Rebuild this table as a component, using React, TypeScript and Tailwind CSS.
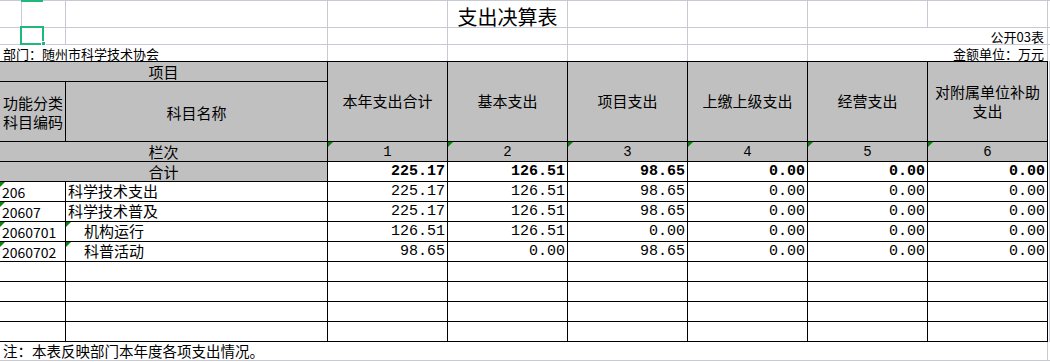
import React from "react";

const COLS = "grid grid-cols-[22px_44px_262px_repeat(6,120px)_2px]";
const GRID = "border-[#c7cad5]";
const HEAD = "bg-[#c0c0c0] border-black";

const headers = ["本年支出合计", "基本支出", "项目支出", "上缴上级支出", "经营支出", "对附属单位补助支出"];

const total = ["225.17", "126.51", "98.65", "0.00", "0.00", "0.00"];

const rows = [
  { code: "206", name: "科学技术支出", sub: false, vals: ["225.17", "126.51", "98.65", "0.00", "0.00", "0.00"] },
  { code: "20607", name: "科学技术普及", sub: false, vals: ["225.17", "126.51", "98.65", "0.00", "0.00", "0.00"] },
  { code: "2060701", name: "机构运行", sub: true, vals: ["126.51", "126.51", "0.00", "0.00", "0.00", "0.00"] },
  { code: "2060702", name: "科普活动", sub: true, vals: ["98.65", "0.00", "98.65", "0.00", "0.00", "0.00"] },
];

function Flag() {
  // little green "number stored as text" marker
  return (
    <span className="absolute top-0 left-0 w-0 h-0 border-t-[5px] border-r-[5px] border-t-[#0a850a] border-r-transparent" />
  );
}

export default function App() {
  return (
    <div className="relative w-[1050px] h-[362px] bg-white overflow-hidden text-black font-['Noto_Sans_CJK_SC',sans-serif]">
      {/* sheet header rows */}
      <div className={`${COLS} grid-rows-[28px_17px_16px]`}>
        {/* row 1 : title */}
        {Array.from({ length: 10 }).map((_, i) => (
          <div
            key={"t" + i}
            className={`border-t border-b ${i < 9 ? "border-r" : ""} ${GRID} flex items-center justify-center pt-[5px] text-[20px] leading-none whitespace-nowrap`}
          >
            {i === 4 ? "支出决算表" : null}
          </div>
        ))}

        {/* row 2 */}
        {Array.from({ length: 7 }).map((_, i) => (
          <div key={"a" + i} className={`border-b border-r ${GRID}`} />
        ))}
        <div className={`col-span-2 border-b border-r ${GRID} flex items-center justify-end pr-[3px] text-[13px] leading-none`}>
          公开03表
        </div>
        <div className={`border-b ${GRID}`} />

        {/* row 3 */}
        <div className={`col-span-3 border-r ${GRID} flex items-end pl-[3px] text-[13px] leading-[15px] whitespace-nowrap`}>
          部门：随州市科学技术协会
        </div>
        {Array.from({ length: 4 }).map((_, i) => (
          <div key={"b" + i} className={`border-r ${GRID}`} />
        ))}
        <div className={`col-span-2 border-r ${GRID} flex items-end justify-end pr-[3px] text-[13px] leading-[15px]`}>
          金额单位：万元
        </div>
        <div />
      </div>

      {/* table head */}
      <div className={`${COLS} grid-rows-[21px_60px] text-[15px]`}>
        <div className={`col-span-3 border-t border-r border-b ${HEAD} flex items-center justify-center leading-none`}>
          项目
        </div>
        {headers.map((h) => (
          <div
            key={h}
            className={`row-span-2 border-t border-r border-b ${HEAD} flex items-center justify-center text-center leading-[19px] px-[6px] pb-[2px]`}
          >
            {h === "对附属单位补助支出" ? (
              <span>
                对附属单位补助
                <br />
                支出
              </span>
            ) : (
              h
            )}
          </div>
        ))}
        <div className={`row-span-2 border-r ${GRID}`} />
        <div className={`col-span-2 border-r border-b ${HEAD} flex items-center pl-[3px] leading-[19px]`}>
          <span>
            功能分类
            <br />
            科目编码
          </span>
        </div>
        <div className={`border-r border-b ${HEAD} flex items-center justify-center pt-[2px] leading-none`}>科目名称</div>
      </div>

      {/* table body */}
      <div className={`${COLS} auto-rows-[20px] text-[15px]`}>
        <div className={`col-span-3 border-r border-b ${HEAD} flex items-center justify-center pb-[1px] leading-none`}>栏次</div>
        {[1, 2, 3, 4, 5, 6].map((n) => (
          <div
            key={n}
            className={`relative border-r border-b ${HEAD} flex items-center justify-center font-['Liberation_Mono',monospace] text-[14px] leading-none`}
          >
            <Flag />
            {n}
          </div>
        ))}
        <div className={`border-r ${GRID}`} />

        <div className={`col-span-3 border-r border-b ${HEAD} flex items-center justify-center pb-[1px] leading-none`}>合计</div>
        {total.map((v, i) => (
          <div
            key={"tot" + i}
            className="border-r border-b border-black flex items-center justify-end pr-[2px] font-['Liberation_Mono',monospace] font-bold leading-none"
          >
            {v}
          </div>
        ))}
        <div className={`border-r ${GRID}`} />

        {rows.map((r) => (
          <React.Fragment key={r.code}>
            <div className="relative col-span-2 border-r border-b border-black flex items-center pl-[2px] text-[14px] leading-none">
              <Flag />
              {r.code}
            </div>
            <div
              className={`relative border-r border-b border-black flex items-center pb-[2px] leading-none ${r.sub ? "pl-[18px]" : "pl-[2px]"}`}
            >
              {r.sub && <Flag />}
              {r.name}
            </div>
            {r.vals.map((v, i) => (
              <div
                key={i}
                className="border-r border-b border-black flex items-center justify-end pr-[2px] font-['Liberation_Mono',monospace] leading-none"
              >
                {v}
              </div>
            ))}
            <div className={`border-r ${GRID}`} />
          </React.Fragment>
        ))}

        {Array.from({ length: 4 }).map((_, k) => (
          <React.Fragment key={"e" + k}>
            <div className="col-span-2 border-r border-b border-black" />
            {Array.from({ length: 7 }).map((_, i) => (
              <div key={i} className="border-r border-b border-black" />
            ))}
            <div className={`border-r ${GRID}`} />
          </React.Fragment>
        ))}
      </div>

      {/* note */}
      <div className={`${COLS} grid-rows-[19px]`}>
        <div className={`col-span-9 border-r border-b ${GRID} flex items-center pl-[3px] text-[14.5px] leading-none whitespace-nowrap`}>
          注：本表反映部门本年度各项支出情况。
        </div>
        <div className={`border-b ${GRID}`} />
      </div>

      {/* cell selection overlay */}
      <div className="absolute left-[21px] top-0 w-[22px] h-[2px] bg-[#20b77a]" />
      <div className="absolute left-[20px] top-[26px] w-[24px] h-[19px] border-2 border-[#20b77a]" />
      <div className="absolute left-[41px] top-[41px] w-[5px] h-[5px] bg-[#20b77a] border border-white" />
    </div>
  );
}
